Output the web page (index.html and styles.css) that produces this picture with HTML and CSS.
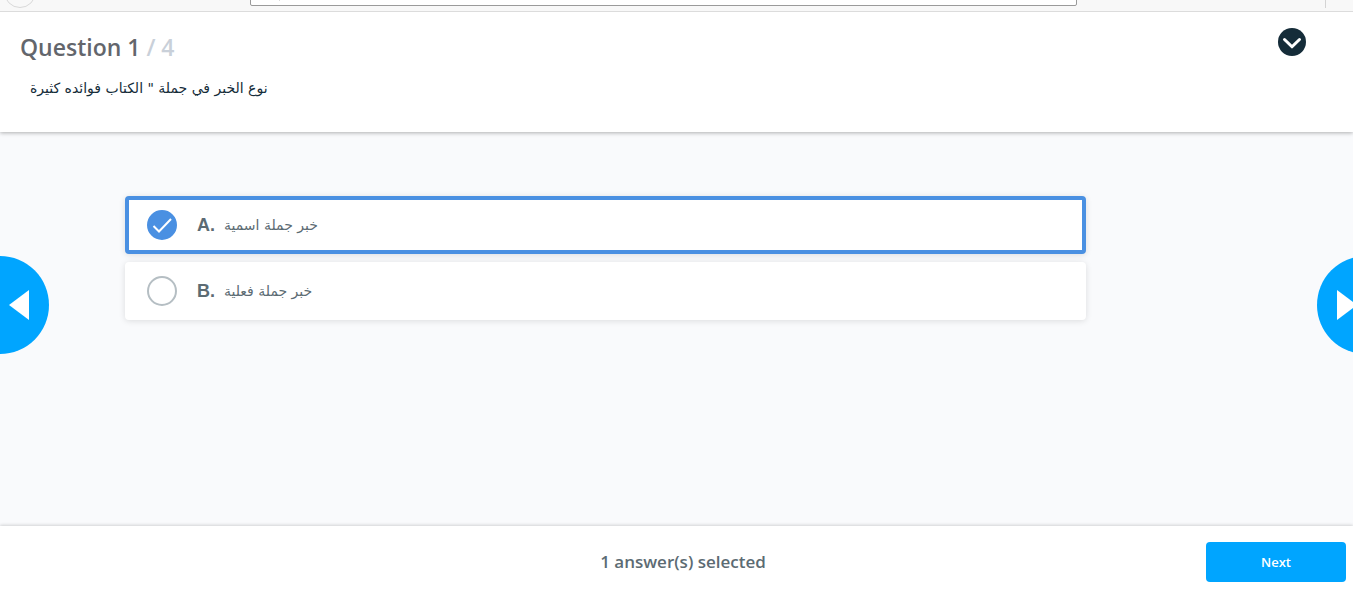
FILE: index.html
```html
<!DOCTYPE html>
<html lang="en">
<head>
<meta charset="utf-8">
<meta name="viewport" content="width=device-width, initial-scale=1">
<title>Question 1 / 4</title>
<link rel="stylesheet" href="styles.css">
</head>
<body>
<div class="topbar">
  <span class="topbar-circle"></span>
  <span class="topbar-field"><span class="topbar-field-divider"></span></span>
  <span class="topbar-divider"></span>
</div>
<header class="question">
  <div class="question-body">
    <h1 class="question-title">Question 1 <span class="question-total">/ 4</span></h1>
    <p class="question-text" lang="ar" dir="rtl">نوع الخبر في جملة " الكتاب فوائده كثيرة</p>
  </div>
  <button class="collapse" type="button" aria-label="Collapse question">
    <svg width="28" height="28" viewBox="0 0 28 28"><circle cx="14" cy="14" r="14" fill="#152c39"/><path d="M6.5 11.5L14 18.8L21.5 11.5" fill="none" stroke="#fff" stroke-width="3" stroke-linecap="round" stroke-linejoin="round"/></svg>
  </button>
</header>
<main class="answers">
  <div class="options">
    <label class="option option-selected">
      <span class="tick">
        <input class="tick-input" type="checkbox" name="answer" checked>
        <svg class="tick-mark" width="30" height="30" viewBox="0 0 30 30"><path d="M6.5 16L12 21.5L24 9" fill="none" stroke="#fff" stroke-width="2"/></svg>
      </span>
      <span class="option-letter">A.</span>
      <span class="option-text" lang="ar" dir="rtl">خبر جملة اسمية</span>
    </label>
    <label class="option">
      <span class="tick">
        <input class="tick-input" type="checkbox" name="answer">
      </span>
      <span class="option-letter">B.</span>
      <span class="option-text" lang="ar" dir="rtl">خبر جملة فعلية</span>
    </label>
  </div>
  <button class="arrow arrow-left" type="button" aria-label="Previous question">
    <svg width="98" height="98" viewBox="0 0 98 98"><path d="M58 49L78 34V64Z" fill="#fff"/></svg>
  </button>
  <button class="arrow arrow-right" type="button" aria-label="Next question">
    <svg width="98" height="98" viewBox="0 0 98 98"><path d="M40 49L20 34V64Z" fill="#fff"/></svg>
  </button>
</main>
<footer class="footer">
  <p class="status">1 answer(s) selected</p>
  <button class="next" type="button">Next</button>
</footer>
</body>
</html>
```
FILE: styles.css
```css
* {
  box-sizing: border-box;
}

body {
  margin: 0;
  min-height: 100vh;
  display: flex;
  flex-direction: column;
  background: #f9fafc;
  color: #5c6b73;
  font-family: "Open Sans", "DejaVu Sans", sans-serif;
}

button {
  border: 0;
  padding: 0;
  cursor: pointer;
  font-family: inherit;
}

svg {
  display: block;
}

.topbar {
  position: relative;
  z-index: 2;
  height: 12px;
  display: flex;
  align-items: flex-end;
  overflow: hidden;
  background: #f8f8f8;
  border-bottom: 1px solid #dcdcdc;
}

.topbar-circle {
  flex: none;
  width: 32px;
  height: 32px;
  margin: 0 214px 3px 4px;
  border: 1px solid #d9d9d9;
  border-radius: 50%;
}

.topbar-field {
  flex: 1;
  display: flex;
  height: 20px;
  margin-bottom: 5px;
  padding: 0 0 4px 28px;
  background: #fff;
  border: 1px solid #9a9a9a;
  border-radius: 2px;
}

.topbar-field-divider {
  width: 1px;
  background: #dcdcdc;
}

.topbar-divider {
  width: 1px;
  height: 20px;
  margin: 0 27px 3px 248px;
  background: #d4d4d4;
}

.question {
  position: relative;
  z-index: 1;
  display: flex;
  justify-content: space-between;
  align-items: flex-start;
  padding: 16px 47px 30px 20px;
  background: #fff;
  box-shadow: 0 1px 4px rgba(0, 0, 0, 0.3);
}

.question-title {
  margin: 0;
  font-size: 23px;
  line-height: 38px;
  font-weight: 600;
  color: #63666c;
}

.question-total {
  color: #c9d0d9;
}

.question-text {
  margin: 8px 0 0 10px;
  font-family: "DejaVu Sans", sans-serif;
  font-size: 14px;
  line-height: 28px;
  color: #152c39;
}

.collapse {
  background: none;
}

.answers {
  position: relative;
  flex: 1;
  overflow: hidden;
  padding: 64px 267px 64px 125px;
}

.options {
  display: flex;
  flex-direction: column;
  gap: 8px;
}

.option {
  display: flex;
  align-items: center;
  height: 58px;
  padding: 0 18px;
  border: 4px solid #fff;
  border-radius: 4px;
  background: #fff;
  box-shadow: 0 1px 6px rgba(0, 0, 0, 0.12);
  cursor: pointer;
}

.option-selected {
  border-color: #4a90e2;
}

.tick {
  display: grid;
  margin-right: 20px;
}

.tick-input,
.tick-mark {
  grid-area: 1 / 1;
}

.tick-input {
  appearance: none;
  width: 30px;
  height: 30px;
  margin: 0;
  border: 2px solid #b5bec3;
  border-radius: 50%;
  background: #fff;
}

.tick-input:checked {
  border-color: #4a90e2;
  background: #4a90e2;
}

.tick-mark {
  pointer-events: none;
}

.option-letter {
  margin-right: 9px;
  font-family: "Liberation Sans", Arial, sans-serif;
  font-size: 18px;
  font-weight: 700;
}

.option-text {
  font-family: "DejaVu Sans", sans-serif;
  font-size: 14px;
  line-height: 24px;
}

.arrow {
  position: absolute;
  top: 124px;
  width: 98px;
  height: 98px;
  border-radius: 50%;
  background: #00a5ff;
}

.arrow-left {
  left: -49px;
}

.arrow-right {
  right: -62px;
}

.footer {
  position: relative;
  display: grid;
  grid-template-columns: 1fr auto 1fr;
  align-items: center;
  padding: 16px 7px 10px 20px;
  background: #fff;
  box-shadow: 0 -1px 3px rgba(0, 0, 0, 0.16);
}

.status {
  grid-column: 2;
  margin: 0;
  font-size: 17px;
  line-height: 24px;
  font-weight: 600;
}

.next {
  justify-self: end;
  width: 140px;
  height: 40px;
  border-radius: 4px;
  background: #00a5ff;
  color: #fff;
  font-size: 13px;
  font-weight: 600;
}
```
